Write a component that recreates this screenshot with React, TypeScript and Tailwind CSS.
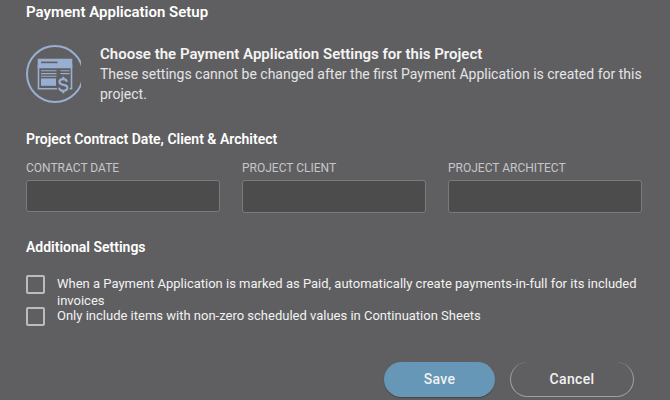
import React from "react";

function InvoiceIcon() {
  return (
    <svg
      viewBox="0 0 55 60"
      className="h-[60px] w-[55px] shrink-0 overflow-hidden text-[#98afd1]"
      fill="none"
      stroke="currentColor"
      aria-hidden="true"
    >
      <circle cx="29" cy="30" r="28" strokeWidth="2" />
      <path d="M11.7 14.8H46.3V24.2H11.7Z" fill="currentColor" stroke="none" />
      <path d="M15 18.4H31.5" stroke="#5f5f61" strokeWidth="1.6" />
      <path d="M12.5 20.6V44.8H31M45.5 20.6V44.8H43.5" strokeWidth="1.6" />
      <path d="M15 26.8H30.5M34.5 26.8H43.5M15 29.6H30.5M34.5 29.6H43.5M15 32.3H30.5" strokeWidth="1.1" />
      <path d="M15 34.4H30V41.8H15Z" fill="currentColor" stroke="none" />
      <path
        d="M41 37.7C40.5 35.9 39.3 35.1 37.3 35.1C35 35.1 33.4 36.3 33.4 38.1C33.4 42.2 41.4 39.6 41.4 43.6C41.4 45.6 39.8 46.8 37.4 46.8C34.9 46.8 33.3 45.6 33.1 43.6M37.3 32.8V35.2M37.3 46.6V49.2"
        strokeWidth="2.1"
      />
    </svg>
  );
}

function Field({ id, label, height }: { id: string; label: string; height: string }) {
  return (
    <div className="min-w-0">
      <label htmlFor={id} className="block text-[12px] leading-4 text-[#c6c6c8] uppercase">
        {label}
      </label>
      <input
        id={id}
        type="text"
        className={`mt-1 block w-full rounded-[3px] border border-[#7b7b7d] bg-[#4c4c4c] px-2 text-[13px] text-white outline-none ${height}`}
      />
    </div>
  );
}

function Option({ id, children }: { id: string; children: React.ReactNode }) {
  return (
    <div className="flex items-start gap-3">
      <input
        id={id}
        type="checkbox"
        className="size-[19px] shrink-0 appearance-none rounded-[2px] border-2 border-[#bcbcbe] checked:bg-[#6797b6]"
      />
      <label htmlFor={id} className="text-[13px] leading-[17px] text-[#f2f2f2]">
        {children}
      </label>
    </div>
  );
}

export default function App() {
  return (
    <main className="min-h-screen bg-[#5f5f61] px-[26px] pt-0.5 font-['Roboto','Liberation_Sans',sans-serif] text-white">
      <h1 className="text-[15px] leading-5 font-semibold">Payment Application Setup</h1>

      <section className="mt-[22px] flex items-start gap-[19px]">
        <InvoiceIcon />
        <div className="text-[14px] leading-5 text-[#e4e4e5]">
          <h2 className="text-[15px] leading-5 font-semibold text-[#f4f4f4]">
            Choose the Payment Application Settings for this Project
          </h2>
          <p>
            These settings cannot be changed after the first Payment Application is created for this
            project.
          </p>
        </div>
      </section>

      <section className="mt-[25px]">
        <h2 className="text-[14px] leading-5 font-semibold">Project Contract Date, Client &amp; Architect</h2>
        <div className="mt-[11px] grid grid-cols-[194fr_184fr_194fr] gap-[22px] pr-0.5">
          <Field id="contract-date" label="Contract Date" height="h-8" />
          <Field id="project-client" label="Project Client" height="h-[33px]" />
          <Field id="project-architect" label="Project Architect" height="h-[33px]" />
        </div>
      </section>

      <section className="mt-6">
        <h2 className="text-[14px] leading-5 font-semibold">Additional Settings</h2>
        <div className="mt-[18px] flex flex-col -space-y-0.5">
          <Option id="auto-payments">
            When a Payment Application is marked as Paid, automatically create payments-in-full for
            its included invoices
          </Option>
          <Option id="non-zero">
            Only include items with non-zero scheduled values in Continuation Sheets
          </Option>
        </div>
      </section>

      <div className="mt-9 flex justify-end gap-[15px] pr-2.5 text-[14px] font-medium text-[#f2f2f2]">
        <button
          type="button"
          className="h-[35px] w-[111px] rounded-[18px] bg-[#6797b6] tracking-wide shadow-[0_1px_1px_#48484a]"
        >
          Save
        </button>
        <button
          type="button"
          className="h-[35px] w-[124px] rounded-[18px] border border-t-0 border-[#a0a0a2] tracking-wide"
        >
          Cancel
        </button>
      </div>
    </main>
  );
}
